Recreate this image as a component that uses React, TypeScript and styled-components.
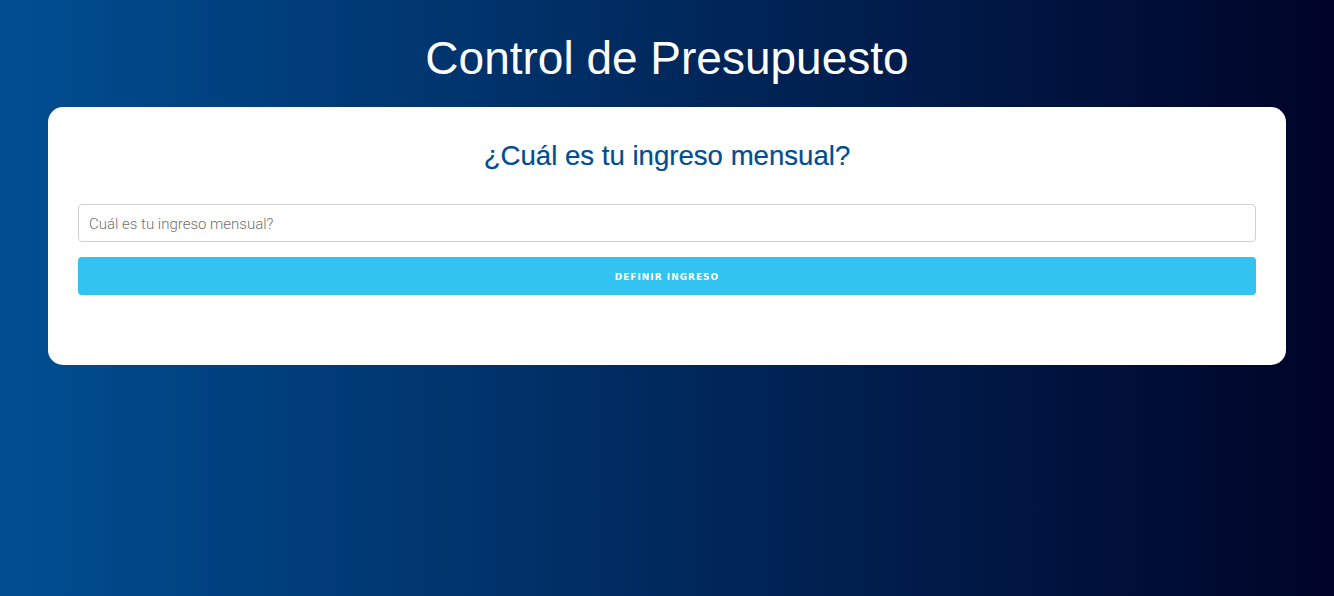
import React from "react";
import styled, { createGlobalStyle } from "styled-components";

const Global = createGlobalStyle`
  html, body { margin: 0; padding: 0; }
  body {
    min-height: 596px;
    background: linear-gradient(to right, #004e92, #000428);
    font-family: "Liberation Sans", Arial, sans-serif;
  }
  * { box-sizing: border-box; }
`;

const Page = styled.div`
  display: flex;
  flex-direction: column;
  padding: 0 48px;
  min-height: 596px;
`;

const Title = styled.h1`
  margin: 30px 0 20px;
  text-align: center;
  color: #ffffff;
  font-family: "Liberation Sans", Arial, sans-serif;
  font-weight: 400;
  font-size: 46px;
  line-height: 57px;
`;

const Card = styled.div`
  background: #ffffff;
  border-radius: 15px;
  padding: 30px 30px 70px;
`;

const Question = styled.h2`
  margin: 0 0 30px;
  text-align: center;
  color: #004e92;
  font-family: "Liberation Sans", Arial, sans-serif;
  font-weight: 400;
  font-size: 27.6px;
  line-height: 37px;
  -webkit-text-stroke: 0.2px #004e92;
`;

const Form = styled.form`
  display: flex;
  flex-direction: column;
  gap: 15px;
`;

const Input = styled.input`
  height: 38px;
  width: 100%;
  padding: 7px 10px 5px;
  border: 1px solid #d1d1d1;
  border-radius: 4px;
  font-family: Roboto, "Open Sans", sans-serif;
  font-weight: 300;
  font-size: 15px;
  color: #222;
  outline: none;
  &::placeholder { color: #6f6f6f; }
`;

const Button = styled.button`
  height: 38px;
  width: 100%;
  padding: 2px 0 0;
  border: none;
  border-radius: 4px;
  background: #33c3f0;
  color: #ffffff;
  font-family: "DejaVu Sans", Verdana, sans-serif;
  font-weight: 700;
  font-size: 9px;
  letter-spacing: 1px;
  text-transform: uppercase;
  cursor: pointer;
`;

export default function App() {
  return (
    <>
      <Global />
      <Page>
        <Title>Control de Presupuesto</Title>
        <Card>
          <Question>¿Cuál es tu ingreso mensual?</Question>
          <Form onSubmit={(e) => e.preventDefault()}>
            <Input type="number" placeholder="Cuál es tu ingreso mensual?" />
            <Button type="submit">Definir ingreso</Button>
          </Form>
        </Card>
      </Page>
    </>
  );
}
